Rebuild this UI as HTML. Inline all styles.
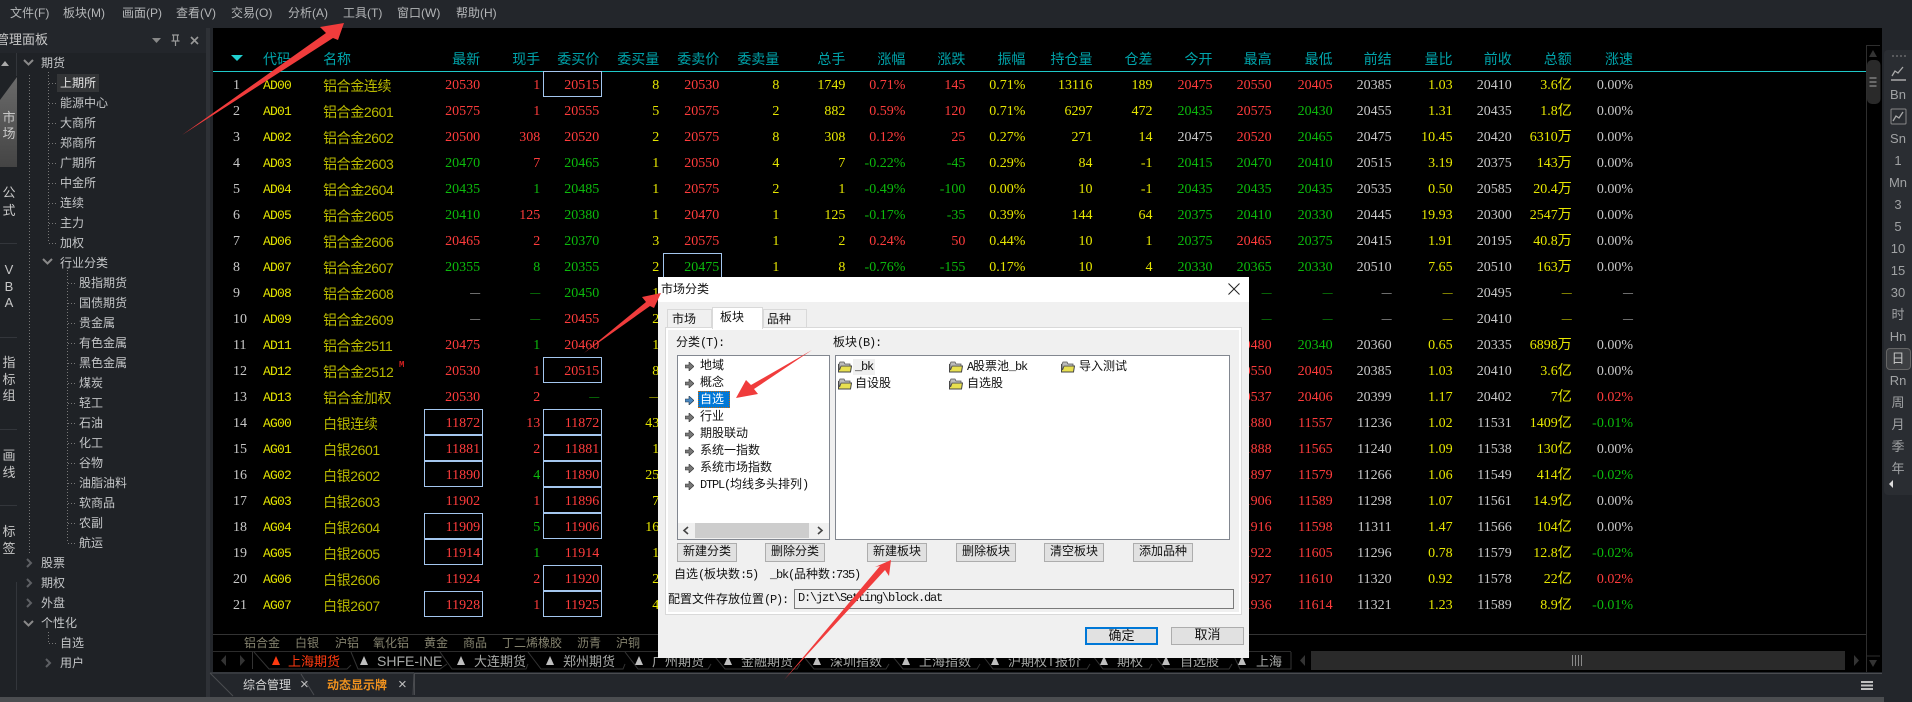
<!DOCTYPE html>
<html lang="zh-CN"><head><meta charset="utf-8"><title>市场分类</title>
<style>
html,body{margin:0;padding:0;width:1912px;height:702px;overflow:hidden;background:#23262b}
body{position:relative;font-family:"Liberation Sans","WenQuanYi Zen Hei","Noto Sans CJK SC",sans-serif;font-size:12px;color:#bbb}
.a{position:absolute;white-space:nowrap}
.m{top:4px;line-height:18px;color:#b4b6b8}
#side{position:absolute;left:0;top:28px;width:206px;height:669px;background:#1f2226}
.t{position:absolute;white-space:nowrap;line-height:16px;color:#c4c6c8}
.l1{left:41px}.l2{left:60px}.l3{left:79px}
.vt{position:absolute;left:1px;width:16px;text-align:center;line-height:16px;color:#c8c8c8;font-size:13px}
.sep{position:absolute;left:0;width:17px;height:1px;background:#33363b}
#main{position:absolute;left:213px;top:28px;width:1669px;height:644px;background:#000}
table{position:absolute;left:213px;top:45px;border-collapse:collapse;table-layout:fixed;width:1420px;font-family:"Liberation Serif","WenQuanYi Zen Hei","Noto Sans CJK SC",serif;font-size:14px;color:#e6e600}
td,th{height:26px;padding:0;line-height:26px;text-align:right;font-weight:normal;white-space:nowrap;overflow:visible;position:relative}
td{top:2px}th{top:1px}
th{color:#00a3aa;font-family:"Liberation Sans","WenQuanYi Zen Hei","Noto Sans CJK SC",sans-serif}
td:nth-child(1){text-align:left;padding-left:20px;color:#c8c8c8}
td:nth-child(2){text-align:left;font-family:"Liberation Mono",monospace;font-size:13px;letter-spacing:-.8px;color:#e2e200}
td:nth-child(3){text-align:left;color:#b9b900;font-family:"Liberation Sans","WenQuanYi Zen Hei","Noto Sans CJK SC",sans-serif;letter-spacing:-.4px}
th:nth-child(2),th:nth-child(3){text-align:left}
.r{color:#ff3c3c}.g{color:#0cba0c}.w{color:#c8c8c8}.x{font-size:10px}
.box{position:absolute;width:57px;height:24px;border:1px solid #a4c6ee}
.cat{position:absolute;top:635px;line-height:16px;color:#85836f}
.tb{position:absolute;top:653px;line-height:17px;font-size:13px;color:#a8aaa8}
.tri{position:absolute;top:656px;width:0;height:0;border-left:4px solid transparent;border-right:4px solid transparent;border-bottom:9px solid #bfbfbf}
.rt{position:absolute;left:1884px;width:28px;text-align:center;line-height:20px;color:#a0a2a4;font-size:13px}
#dlg{position:absolute;left:658px;top:277px;width:591px;height:381px;background:#f0f0f0;color:#111;font-family:"Liberation Mono","WenQuanYi Zen Hei","Noto Sans CJK SC",monospace;font-size:12px}
#dlg .d{position:absolute;white-space:nowrap;line-height:16px}
.h{letter-spacing:-1.2px}
.tab{position:absolute;box-sizing:border-box;border:1px solid #d9d9d9;border-bottom:0;background:#f0f0f0;text-align:left;font-size:12px;line-height:20px;color:#111}
.list{position:absolute;box-sizing:border-box;background:#fff;border:1px solid #828790}
.btn{position:absolute;box-sizing:border-box;background:#e1e1e1;border:1px solid #adadad;text-align:center;top:266px;height:19px;width:60px;line-height:17px;font-size:12px;color:#111}
.ar{position:absolute;left:27px;width:9px;height:9px}
.fd{position:absolute;width:14px;height:12px}
</style></head><body>

<div class="a m" style="left:10px">文件(F)</div><div class="a m" style="left:63px">板块(M)</div><div class="a m" style="left:122px">画面(P)</div><div class="a m" style="left:176px">查看(V)</div><div class="a m" style="left:231px">交易(O)</div><div class="a m" style="left:288px">分析(A)</div><div class="a m" style="left:343px">工具(T)</div><div class="a m" style="left:397px">窗口(W)</div><div class="a m" style="left:456px">帮助(H)</div>

<div id="side"></div>
<div class="a" style="left:0;top:28px;width:206px;height:25px;background:#23262b"></div>
<div class="a" style="left:206px;top:28px;width:4px;height:669px;background:#2e3136"></div>
<div class="a" style="left:-4px;top:30px;font-size:13px;line-height:20px;color:#c8c8c8">管理面板</div>
<svg class="a" style="left:150px;top:32px" width="55" height="18" viewBox="0 0 55 18"><path d="M2 6h9l-4.500 5z" fill="#888"/><path d="M22 3h7M23.500 3v6M27.500 3v6M21.500 9h8M25.500 9v5" stroke="#999" stroke-width="1.200" fill="none"/><path d="M41 5l7 7M48 5l-7 7" stroke="#999" stroke-width="1.600" fill="none"/></svg>

<svg class="a" style="left:0;top:50px" width="210" height="640" viewBox="0 50 210 640">
<path d="M16.500 53V76M16.500 582V690" stroke="#33363b"/>
<path d="M1 66h8l-4-5z" fill="#aaa"/>
<defs><linearGradient id="gr" x1="0" y1="0" x2="0" y2="1"><stop offset="0" stop-color="#6a6a6a"/><stop offset="1" stop-color="#444"/></linearGradient></defs>
<path d="M0 100L17 77V167H0z" fill="url(#gr)"/>
<path d="M24 60l4.500 4.500L33 60M43 259l4.500 4.500L52 259M24 621l4.500 4.500L33 621" stroke="#8a8a8a" stroke-width="2" fill="none"/>
<path d="M27 559l4 4-4 4M27 579l4 4-4 4M27 599l4 4-4 4M46 659l4 4-4 4" stroke="#5e6064" stroke-width="2" fill="none"/>
<g stroke="#777" stroke-dasharray="1 2" fill="none">
<path d="M29.500 75V553"/><path d="M48.500 72V243M48.500 632V643"/><path d="M67.500 270V543"/>
<path d="M49 83.500h8M49 103.500h8M49 123.500h8M49 143.500h8M49 163.500h8M49 183.500h8M49 203.500h8M49 223.500h8M49 243.500h8M49 643.500h8"/>
<path d="M68 283.500h9M68 303.500h9M68 323.500h9M68 343.500h9M68 363.500h9M68 383.500h9M68 403.500h9M68 423.500h9M68 443.500h9M68 463.500h9M68 483.500h9M68 503.500h9M68 523.500h9M68 543.500h9"/>
</g></svg>
<div class="a" style="left:57px;top:74px;width:42px;height:18px;background:#333537"></div>
<div class="vt" style="top:110px">市</div><div class="vt" style="top:126px">场</div>
<div class="vt" style="top:185px">公</div><div class="vt" style="top:203px">式</div>
<div class="vt" style="top:262px">V</div><div class="vt" style="top:279px">B</div><div class="vt" style="top:295px">A</div>
<div class="vt" style="top:355px">指</div><div class="vt" style="top:372px">标</div><div class="vt" style="top:388px">组</div>
<div class="vt" style="top:448px">画</div><div class="vt" style="top:465px">线</div>
<div class="vt" style="top:524px">标</div><div class="vt" style="top:541px">签</div>
<div class="sep" style="top:243px"></div><div class="sep" style="top:337px"></div><div class="sep" style="top:429px"></div><div class="sep" style="top:505px"></div>

<div class="t l1" style="top:55px">期货</div>
<div class="t l2" style="top:75px;color:#e4e4e4">上期所</div><div class="t l2" style="top:95px">能源中心</div><div class="t l2" style="top:115px">大商所</div><div class="t l2" style="top:135px">郑商所</div><div class="t l2" style="top:155px">广期所</div><div class="t l2" style="top:175px">中金所</div><div class="t l2" style="top:195px">连续</div><div class="t l2" style="top:215px">主力</div><div class="t l2" style="top:235px">加权</div><div class="t l2" style="top:255px">行业分类</div>
<div class="t l3" style="top:275px">股指期货</div><div class="t l3" style="top:295px">国债期货</div><div class="t l3" style="top:315px">贵金属</div><div class="t l3" style="top:335px">有色金属</div><div class="t l3" style="top:355px">黑色金属</div><div class="t l3" style="top:375px">煤炭</div><div class="t l3" style="top:395px">轻工</div><div class="t l3" style="top:415px">石油</div><div class="t l3" style="top:435px">化工</div><div class="t l3" style="top:455px">谷物</div><div class="t l3" style="top:475px">油脂油料</div><div class="t l3" style="top:495px">软商品</div><div class="t l3" style="top:515px">农副</div><div class="t l3" style="top:535px">航运</div>
<div class="t l1" style="top:555px">股票</div><div class="t l1" style="top:575px">期权</div><div class="t l1" style="top:595px">外盘</div><div class="t l1" style="top:615px">个性化</div>
<div class="t l2" style="top:635px">自选</div><div class="t l2" style="top:655px">用户</div>

<div id="main"></div>
<svg class="a" style="left:231px;top:54px" width="13" height="8"><path d="M0 1h12L6 7z" fill="#20d0d0"/></svg>
<div class="a" style="left:213px;top:71px;width:1653px;height:1px;background:#1fc8c8"></div>

<table>
<colgroup><col style="width:50px"><col style="width:60px"><col style="width:97px"><col style="width:60px"><col style="width:60px"><col style="width:59px"><col style="width:60px"><col style="width:60px"><col style="width:60px"><col style="width:66px"><col style="width:60px"><col style="width:60px"><col style="width:60px"><col style="width:67px"><col style="width:60px"><col style="width:60px"><col style="width:59px"><col style="width:61px"><col style="width:59px"><col style="width:61px"><col style="width:59px"><col style="width:60px"><col style="width:61px"></colgroup>
<tr><th></th><th>代码</th><th>名称</th><th>最新</th><th>现手</th><th>委买价</th><th>委买量</th><th>委卖价</th><th>委卖量</th><th>总手</th><th>涨幅</th><th>涨跌</th><th>振幅</th><th>持仓量</th><th>仓差</th><th>今开</th><th>最高</th><th>最低</th><th>前结</th><th>量比</th><th>前收</th><th>总额</th><th>涨速</th></tr>
<tr><td>1</td><td>AD00</td><td>铝合金连续</td><td class="r">20530</td><td class="r">1</td><td class="r">20515</td><td>8</td><td class="r">20530</td><td>8</td><td>1749</td><td class="r">0.71%</td><td class="r">145</td><td>0.71%</td><td>13116</td><td>189</td><td class="r">20475</td><td class="r">20550</td><td class="r">20405</td><td class="w">20385</td><td>1.03</td><td class="w">20410</td><td>3.6亿</td><td class="w">0.00%</td></tr>
<tr><td>2</td><td>AD01</td><td>铝合金2601</td><td class="r">20575</td><td class="r">1</td><td class="r">20555</td><td>5</td><td class="r">20575</td><td>2</td><td>882</td><td class="r">0.59%</td><td class="r">120</td><td>0.71%</td><td>6297</td><td>472</td><td class="g">20435</td><td class="r">20575</td><td class="g">20430</td><td class="w">20455</td><td>1.31</td><td class="w">20435</td><td>1.8亿</td><td class="w">0.00%</td></tr>
<tr><td>3</td><td>AD02</td><td>铝合金2602</td><td class="r">20500</td><td class="r">308</td><td class="r">20520</td><td>2</td><td class="r">20575</td><td>8</td><td>308</td><td class="r">0.12%</td><td class="r">25</td><td>0.27%</td><td>271</td><td>14</td><td class="w">20475</td><td class="r">20520</td><td class="g">20465</td><td class="w">20475</td><td>10.45</td><td class="w">20420</td><td>6310万</td><td class="w">0.00%</td></tr>
<tr><td>4</td><td>AD03</td><td>铝合金2603</td><td class="g">20470</td><td class="r">7</td><td class="g">20465</td><td>1</td><td class="r">20550</td><td>4</td><td>7</td><td class="g">-0.22%</td><td class="g">-45</td><td>0.29%</td><td>84</td><td>-1</td><td class="g">20415</td><td class="g">20470</td><td class="g">20410</td><td class="w">20515</td><td>3.19</td><td class="w">20375</td><td>143万</td><td class="w">0.00%</td></tr>
<tr><td>5</td><td>AD04</td><td>铝合金2604</td><td class="g">20435</td><td class="g">1</td><td class="g">20485</td><td>1</td><td class="r">20575</td><td>2</td><td>1</td><td class="g">-0.49%</td><td class="g">-100</td><td>0.00%</td><td>10</td><td>-1</td><td class="g">20435</td><td class="g">20435</td><td class="g">20435</td><td class="w">20535</td><td>0.50</td><td class="w">20585</td><td>20.4万</td><td class="w">0.00%</td></tr>
<tr><td>6</td><td>AD05</td><td>铝合金2605</td><td class="g">20410</td><td class="r">125</td><td class="g">20380</td><td>1</td><td class="r">20470</td><td>1</td><td>125</td><td class="g">-0.17%</td><td class="g">-35</td><td>0.39%</td><td>144</td><td>64</td><td class="g">20375</td><td class="g">20410</td><td class="g">20330</td><td class="w">20445</td><td>19.93</td><td class="w">20300</td><td>2547万</td><td class="w">0.00%</td></tr>
<tr><td>7</td><td>AD06</td><td>铝合金2606</td><td class="r">20465</td><td class="r">2</td><td class="g">20370</td><td>3</td><td class="r">20575</td><td>1</td><td>2</td><td class="r">0.24%</td><td class="r">50</td><td>0.44%</td><td>10</td><td>1</td><td class="g">20375</td><td class="r">20465</td><td class="g">20375</td><td class="w">20415</td><td>1.91</td><td class="w">20195</td><td>40.8万</td><td class="w">0.00%</td></tr>
<tr><td>8</td><td>AD07</td><td>铝合金2607</td><td class="g">20355</td><td class="g">8</td><td class="g">20355</td><td>2</td><td class="g">20475</td><td>1</td><td>8</td><td class="g">-0.76%</td><td class="g">-155</td><td>0.17%</td><td>10</td><td>4</td><td class="g">20330</td><td class="g">20365</td><td class="g">20330</td><td class="w">20510</td><td>7.65</td><td class="w">20510</td><td>163万</td><td class="w">0.00%</td></tr>
<tr><td>9</td><td>AD08</td><td>铝合金2608</td><td class="w x">—</td><td class="g x">—</td><td class="g">20450</td><td>1</td><td></td><td></td><td></td><td></td><td></td><td></td><td></td><td></td><td></td><td class="g x">—</td><td class="g x">—</td><td class="w x">—</td><td class="x">—</td><td class="w">20495</td><td class="x">—</td><td class="w x">—</td></tr>
<tr><td>10</td><td>AD09</td><td>铝合金2609</td><td class="w x">—</td><td class="g x">—</td><td class="r">20455</td><td>2</td><td></td><td></td><td></td><td></td><td></td><td></td><td></td><td></td><td></td><td class="g x">—</td><td class="g x">—</td><td class="w x">—</td><td class="x">—</td><td class="w">20410</td><td class="x">—</td><td class="w x">—</td></tr>
<tr><td>11</td><td>AD11</td><td>铝合金2511</td><td class="r">20475</td><td class="g">1</td><td class="r">20460</td><td>1</td><td></td><td></td><td></td><td></td><td></td><td></td><td></td><td></td><td></td><td class="r">20480</td><td class="g">20340</td><td class="w">20360</td><td>0.65</td><td class="w">20335</td><td>6898万</td><td class="w">0.00%</td></tr>
<tr><td>12</td><td>AD12</td><td>铝合金2512</td><td class="r">20530</td><td class="r">1</td><td class="r">20515</td><td>8</td><td></td><td></td><td></td><td></td><td></td><td></td><td></td><td></td><td></td><td class="r">20550</td><td class="r">20405</td><td class="w">20385</td><td>1.03</td><td class="w">20410</td><td>3.6亿</td><td class="w">0.00%</td></tr>
<tr><td>13</td><td>AD13</td><td>铝合金加权</td><td class="r">20530</td><td class="r">2</td><td class="g x">—</td><td class="x">—</td><td></td><td></td><td></td><td></td><td></td><td></td><td></td><td></td><td></td><td class="r">20537</td><td class="r">20406</td><td class="w">20399</td><td>1.17</td><td class="w">20402</td><td>7亿</td><td class="r">0.02%</td></tr>
<tr><td>14</td><td>AG00</td><td>白银连续</td><td class="r">11872</td><td class="r">13</td><td class="r">11872</td><td>43</td><td></td><td></td><td></td><td></td><td></td><td></td><td></td><td></td><td></td><td class="r">11880</td><td class="r">11557</td><td class="w">11236</td><td>1.02</td><td class="w">11531</td><td>1409亿</td><td class="g">-0.01%</td></tr>
<tr><td>15</td><td>AG01</td><td>白银2601</td><td class="r">11881</td><td class="r">2</td><td class="r">11881</td><td>1</td><td></td><td></td><td></td><td></td><td></td><td></td><td></td><td></td><td></td><td class="r">11888</td><td class="r">11565</td><td class="w">11240</td><td>1.09</td><td class="w">11538</td><td>130亿</td><td class="w">0.00%</td></tr>
<tr><td>16</td><td>AG02</td><td>白银2602</td><td class="r">11890</td><td class="g">4</td><td class="r">11890</td><td>25</td><td></td><td></td><td></td><td></td><td></td><td></td><td></td><td></td><td></td><td class="r">11897</td><td class="r">11579</td><td class="w">11266</td><td>1.06</td><td class="w">11549</td><td>414亿</td><td class="g">-0.02%</td></tr>
<tr><td>17</td><td>AG03</td><td>白银2603</td><td class="r">11902</td><td class="r">1</td><td class="r">11896</td><td>7</td><td></td><td></td><td></td><td></td><td></td><td></td><td></td><td></td><td></td><td class="r">11906</td><td class="r">11589</td><td class="w">11298</td><td>1.07</td><td class="w">11561</td><td>14.9亿</td><td class="w">0.00%</td></tr>
<tr><td>18</td><td>AG04</td><td>白银2604</td><td class="r">11909</td><td class="g">5</td><td class="r">11906</td><td>16</td><td></td><td></td><td></td><td></td><td></td><td></td><td></td><td></td><td></td><td class="r">11916</td><td class="r">11598</td><td class="w">11311</td><td>1.47</td><td class="w">11566</td><td>104亿</td><td class="w">0.00%</td></tr>
<tr><td>19</td><td>AG05</td><td>白银2605</td><td class="r">11914</td><td class="g">1</td><td class="r">11914</td><td>1</td><td></td><td></td><td></td><td></td><td></td><td></td><td></td><td></td><td></td><td class="r">11922</td><td class="r">11605</td><td class="w">11296</td><td>0.78</td><td class="w">11579</td><td>12.8亿</td><td class="g">-0.02%</td></tr>
<tr><td>20</td><td>AG06</td><td>白银2606</td><td class="r">11924</td><td class="r">2</td><td class="r">11920</td><td>2</td><td></td><td></td><td></td><td></td><td></td><td></td><td></td><td></td><td></td><td class="r">11927</td><td class="r">11610</td><td class="w">11320</td><td>0.92</td><td class="w">11578</td><td>22亿</td><td class="r">0.02%</td></tr>
<tr><td>21</td><td>AG07</td><td>白银2607</td><td class="r">11928</td><td class="r">1</td><td class="r">11925</td><td>4</td><td></td><td></td><td></td><td></td><td></td><td></td><td></td><td></td><td></td><td class="r">11936</td><td class="r">11614</td><td class="w">11321</td><td>1.23</td><td class="w">11589</td><td>8.9亿</td><td class="g">-0.01%</td></tr>
</table>
<div class="a" style="left:399px;top:359px;color:#d02020;font:bold 9px 'Liberation Mono',monospace;line-height:12px">M</div>

<div class="box" style="left:543px;top:71px"></div><div class="box" style="left:543px;top:357px"></div><div class="box" style="left:543px;top:409px"></div><div class="box" style="left:543px;top:435px"></div><div class="box" style="left:543px;top:461px"></div><div class="box" style="left:543px;top:487px"></div><div class="box" style="left:543px;top:513px"></div><div class="box" style="left:543px;top:565px"></div><div class="box" style="left:543px;top:591px"></div>
<div class="box" style="left:424px;top:409px"></div><div class="box" style="left:424px;top:435px"></div><div class="box" style="left:424px;top:461px"></div><div class="box" style="left:424px;top:513px"></div><div class="box" style="left:424px;top:539px"></div><div class="box" style="left:424px;top:591px"></div>
<div class="box" style="left:663px;top:253px"></div>

<div class="a" style="left:213px;top:634px;width:1653px;height:1px;background:#333"></div>
<div class="a" style="left:213px;top:651px;width:1078px;height:1px;background:#2c2c2c"></div>
<div class="cat" style="left:244px">铝合金</div><div class="cat" style="left:295px">白银</div><div class="cat" style="left:335px">沪铝</div><div class="cat" style="left:373px">氧化铝</div><div class="cat" style="left:424px">黄金</div><div class="cat" style="left:463px">商品</div><div class="cat" style="left:502px">丁二烯橡胶</div><div class="cat" style="left:577px">沥青</div><div class="cat" style="left:616px">沪铜</div>

<svg class="a" style="left:213px;top:651px" width="1669" height="22" viewBox="213 651 1669 22">
<path d="M226 655v11l-5-5.500zM240 655v11l5-5.500z" fill="#333"/><path d="M252.500 652v17" stroke="#333"/>
<g fill="none" stroke="#333" stroke-width="1"><path d="M254 652l15 17h78l4-4"/><path d="M351 652v0l7 17h82l7-5"/><path d="M440 652l12 17h74l2-5"/><path d="M528 652l13 17h82l2-5"/><path d="M625 652l13 17h70l3-5"/><path d="M711 652l14 17h72l3-5"/><path d="M800 652l14 17h72l3-5"/><path d="M889 652l14 17h74l3-5"/><path d="M980 652l13 17h94l3-5"/><path d="M1090 652l13 17h46l3-5"/><path d="M1152 652l13 17h64l3-5"/><path d="M1232 652l8 17h51v-17"/></g>
<path d="M1305 655v11l-5-5.500zM1854 655v11l5-5.500z" fill="#333"/>
<rect x="1311" y="651" width="534" height="19" fill="#2a2a2a"/>
<path d="M1572.500 655v11M1575.500 655v11M1578.500 655v11M1581.500 655v11" stroke="#8a8a8a"/>
</svg>
<i class="tri" style="left:272px;border-bottom-color:#ff3a10"></i><i class="tri" style="left:360px"></i><i class="tri" style="left:457px"></i><i class="tri" style="left:546px"></i><i class="tri" style="left:635px"></i><i class="tri" style="left:724px"></i><i class="tri" style="left:813px"></i><i class="tri" style="left:902px"></i><i class="tri" style="left:991px"></i><i class="tri" style="left:1100px"></i><i class="tri" style="left:1162px"></i><i class="tri" style="left:1238px"></i>
<div class="tb" style="left:288px;color:#ff3a10">上海期货</div><div class="tb" style="left:377px;font-size:14px">SHFE-INE</div><div class="tb" style="left:474px">大连期货</div><div class="tb" style="left:563px">郑州期货</div><div class="tb" style="left:652px">广州期货</div><div class="tb" style="left:741px">金融期货</div><div class="tb" style="left:830px">深圳指数</div><div class="tb" style="left:919px">上海指数</div><div class="tb" style="left:1008px">沪期权T报价</div><div class="tb" style="left:1117px">期权</div><div class="tb" style="left:1180px">自选股</div><div class="tb" style="left:1256px">上海</div>

<svg class="a" style="left:1866px;top:45px" width="16" height="627" viewBox="0 0 16 627"><path d="M.5 0V627M0 .5H14" stroke="#2e2e2e"/><path d="M7 5l-4 7h8z" fill="#333"/><rect x="1" y="15" width="13.500" height="44" rx="5" fill="#2a2a2a"/><path d="M3.500 33h7M3.500 37h7M3.500 41h7" stroke="#a8a8a8"/><path d="M0 611h14" stroke="#2e2e2e"/><path d="M3 615h8l-4 7z" fill="#333"/></svg>

<div class="a" style="left:1884px;top:50px;width:28px;height:445px;background:#2a2d32;border-radius:4px 0 0 4px"></div>
<svg class="a" style="left:1884px;top:50px" width="28" height="80"><path d="M8 6h2M12 6h2M16 6h2M20 6h2" stroke="#888"/><path d="M7 30h15" stroke="#aaa" stroke-width="1.500"/><path d="M8 26l3-5 3 2 5-6" fill="none" stroke="#aaa" stroke-width="1.300"/><rect x="7" y="59" width="15" height="15" rx="1" fill="none" stroke="#888"/><path d="M9 71l3-5 3 2 4-6" fill="none" stroke="#aaa" stroke-width="1.300"/></svg>
<div class="rt" style="top:85px">Bn</div><div class="rt" style="top:129px">Sn</div><div class="rt" style="top:151px">1</div><div class="rt" style="top:173px">Mn</div><div class="rt" style="top:195px">3</div><div class="rt" style="top:217px">5</div><div class="rt" style="top:239px">10</div><div class="rt" style="top:261px">15</div><div class="rt" style="top:283px">30</div><div class="rt" style="top:305px">时</div><div class="rt" style="top:327px">Hn</div>
<div class="a" style="left:1886px;top:348px;width:23px;height:20px;background:#3d3f42;border:1px solid #666;border-radius:4px"></div>
<div class="rt" style="top:349px;color:#c0c0c0">日</div><div class="rt" style="top:371px">Rn</div><div class="rt" style="top:393px">周</div><div class="rt" style="top:415px">月</div><div class="rt" style="top:437px">季</div><div class="rt" style="top:459px">年</div>
<svg class="a" style="left:1888px;top:480px" width="8" height="8"><path d="M5 0v8L1 4z" fill="#ddd"/></svg>

<div class="a" style="left:0;top:697px;width:1884px;height:5px;background:#4b4d50"></div>
<svg class="a" style="left:207px;top:672px" width="1675" height="25" viewBox="207 672 1675 25"><path d="M210 673h204M414.500 673v22M414 673.500H1882" stroke="#4a4c50" fill="none"/><path d="M210 673l23 23M301 674l13 21M414 674l-1 21" stroke="#4a4c50" fill="none"/><path d="M1861 681h12v2h-12zM1861 684.500h12v2h-12zM1861 688h12v2h-12z" fill="#c0c0c0"/></svg>
<div class="a" style="left:243px;top:677px;line-height:16px;color:#d8d8d8">综合管理</div>
<div class="a" style="left:300px;top:677px;line-height:16px;font-size:15px;color:#c0c0c0">×</div>
<div class="a" style="left:327px;top:677px;line-height:16px;color:#f0921e;font-weight:bold">动态显示牌</div>
<div class="a" style="left:398px;top:677px;line-height:16px;font-size:15px;color:#c0c0c0">×</div>

<div id="dlg">
<div class="a" style="left:0;top:0;width:591px;height:25px;background:#fff"></div>
<div class="d" style="left:3px;top:4px;font-family:'Liberation Sans','WenQuanYi Zen Hei',sans-serif">市场分类</div>
<svg class="a" style="left:570px;top:6px" width="12" height="12"><path d="M.5.5l11 11M11.500.5l-11 11" stroke="#222"/></svg>
<div class="tab" style="left:9px;top:32px;width:45px;height:19px;padding-left:4px">市场</div>
<div class="tab" style="left:105px;top:32px;width:44px;height:19px;padding-left:3px">品种</div>
<div class="a" style="left:7px;top:50px;width:577px;height:288px;box-sizing:border-box;background:#f0f0f0;border:3px solid #fff;border-left-color:#fff;outline:1px solid #d9d9d9;outline-offset:-1px"></div>
<div class="tab" style="left:54px;top:30px;width:51px;height:22px;background:#fff;z-index:2;line-height:20px;padding-left:7px">板块</div>
<div class="d" style="left:18px;top:58px">分类<span class="h">(T):</span></div><div class="d" style="left:175px;top:58px">板块<span class="h">(B):</span></div>
<div class="list" style="left:19px;top:78px;width:153px;height:185px"></div>
<div class="list" style="left:177px;top:78px;width:395px;height:185px"></div>

<div class="a" style="left:40px;top:114px;width:32px;height:17px;background:#0078d7;outline:1px dotted #c46a10;outline-offset:-1px"></div>
<svg class="ar" style="top:85px"><use href="#arw"/></svg><svg class="ar" style="top:102px"><use href="#arw"/></svg><svg class="ar" style="top:119px"><use href="#arb"/></svg><svg class="ar" style="top:136px"><use href="#arw"/></svg><svg class="ar" style="top:153px"><use href="#arw"/></svg><svg class="ar" style="top:170px"><use href="#arw"/></svg><svg class="ar" style="top:187px"><use href="#arw"/></svg><svg class="ar" style="top:204px"><use href="#arw"/></svg>
<svg width="0" height="0" style="position:absolute"><defs>
<path id="arw" d="M0 3h4V0l5 4.500L4 9V6H0z" fill="#777" stroke="#333" stroke-width=".6"/>
<path id="arb" d="M0 3h4V0l5 4.500L4 9V6H0z" fill="#4a88c0" stroke="#234" stroke-width=".6"/>
<g id="fo"><path d="M.5 3V11h12l1-6H3L1.500 9" fill="#e8e050" stroke="#444"/><path d="M1 3l1-2h4l1 2h5v2H3L1 9z" fill="#bbb" stroke="#555" stroke-width=".8"/></g>
</defs></svg>
<div class="d" style="left:42px;top:81px">地域</div><div class="d" style="left:42px;top:98px">概念</div><div class="d" style="left:42px;top:115px;color:#fff">自选</div><div class="d" style="left:42px;top:132px">行业</div><div class="d" style="left:42px;top:149px">期股联动</div><div class="d" style="left:42px;top:166px">系统一指数</div><div class="d" style="left:42px;top:183px">系统市场指数</div><div class="d" style="left:42px;top:200px"><span class="h">DTPL(</span>均线多头排列<span class="h">)</span></div>

<div class="a" style="left:20px;top:246px;width:151px;height:16px;background:#f0f0f0"></div>
<div class="a" style="left:37px;top:246px;width:114px;height:15px;background:#cdcdcd"></div>
<svg class="a" style="left:22px;top:248px" width="146" height="11"><path d="M8 2L4 5.500 8 9M138 2l4 3.500L138 9" fill="none" stroke="#444" stroke-width="1.600"/></svg>

<div class="a" style="left:195px;top:82px;width:22px;height:16px;background:#f0f0f0"></div>
<svg class="fd" style="left:180px;top:84px"><use href="#fo"/></svg><svg class="fd" style="left:291px;top:84px"><use href="#fo"/></svg><svg class="fd" style="left:403px;top:84px"><use href="#fo"/></svg><svg class="fd" style="left:180px;top:101px"><use href="#fo"/></svg><svg class="fd" style="left:291px;top:101px"><use href="#fo"/></svg>
<div class="d" style="left:197px;top:82px"><span class="h">_bk</span></div><div class="d" style="left:309px;top:82px"><span class="h">A</span>股票池<span class="h">_bk</span></div><div class="d" style="left:421px;top:82px">导入测试</div><div class="d" style="left:197px;top:99px">自设股</div><div class="d" style="left:309px;top:99px">自选股</div>

<div class="btn" style="left:19px">新建分类</div><div class="btn" style="left:107px">删除分类</div><div class="btn" style="left:209px">新建板块</div><div class="btn" style="left:298px">删除板块</div><div class="btn" style="left:386px">清空板块</div><div class="btn" style="left:475px">添加品种</div>
<div class="d" style="left:16px;top:290px">自选<span class="h">(</span>板块数<span class="h">:5)</span></div><div class="d" style="left:112px;top:290px"><span class="h">_bk(</span>品种数<span class="h">:735)</span></div>
<div class="d" style="left:10px;top:315px">配置文件存放位置<span class="h">(P):</span></div>
<div class="a" style="left:136px;top:312px;width:440px;height:20px;box-sizing:border-box;border:1px solid #7a7a7a;background:#f0f0f0;line-height:17px;padding-left:3px;letter-spacing:-1.200px">D:\jzt\Setting\block.dat</div>
<div class="a" style="left:427px;top:350px;width:73px;height:18px;box-sizing:border-box;border:2px solid #0078d7;background:#e1e1e1;text-align:center;line-height:15px;font-size:13px">确定</div>
<div class="a" style="left:513px;top:350px;width:73px;height:18px;box-sizing:border-box;border:1px solid #adadad;background:#e1e1e1;text-align:center;line-height:16px;font-size:13px">取消</div>
</div>

<svg class="a" style="left:0;top:0;z-index:5" width="1912" height="702" viewBox="0 0 1912 702">
<g fill="#f03c3c">
<path d="M182 135L326 33 320 27 344 23 338 40 333 38z"/>
<path d="M584 353L646 302 642 297 661 293 654 308 650 306z"/>
<path d="M812 350L751 385 746 380 736 398 758 394 754 389z"/>
<path d="M784 680L880 566 875 567 891 560 889 576 885 570z"/>
</g></svg>
</body></html>
